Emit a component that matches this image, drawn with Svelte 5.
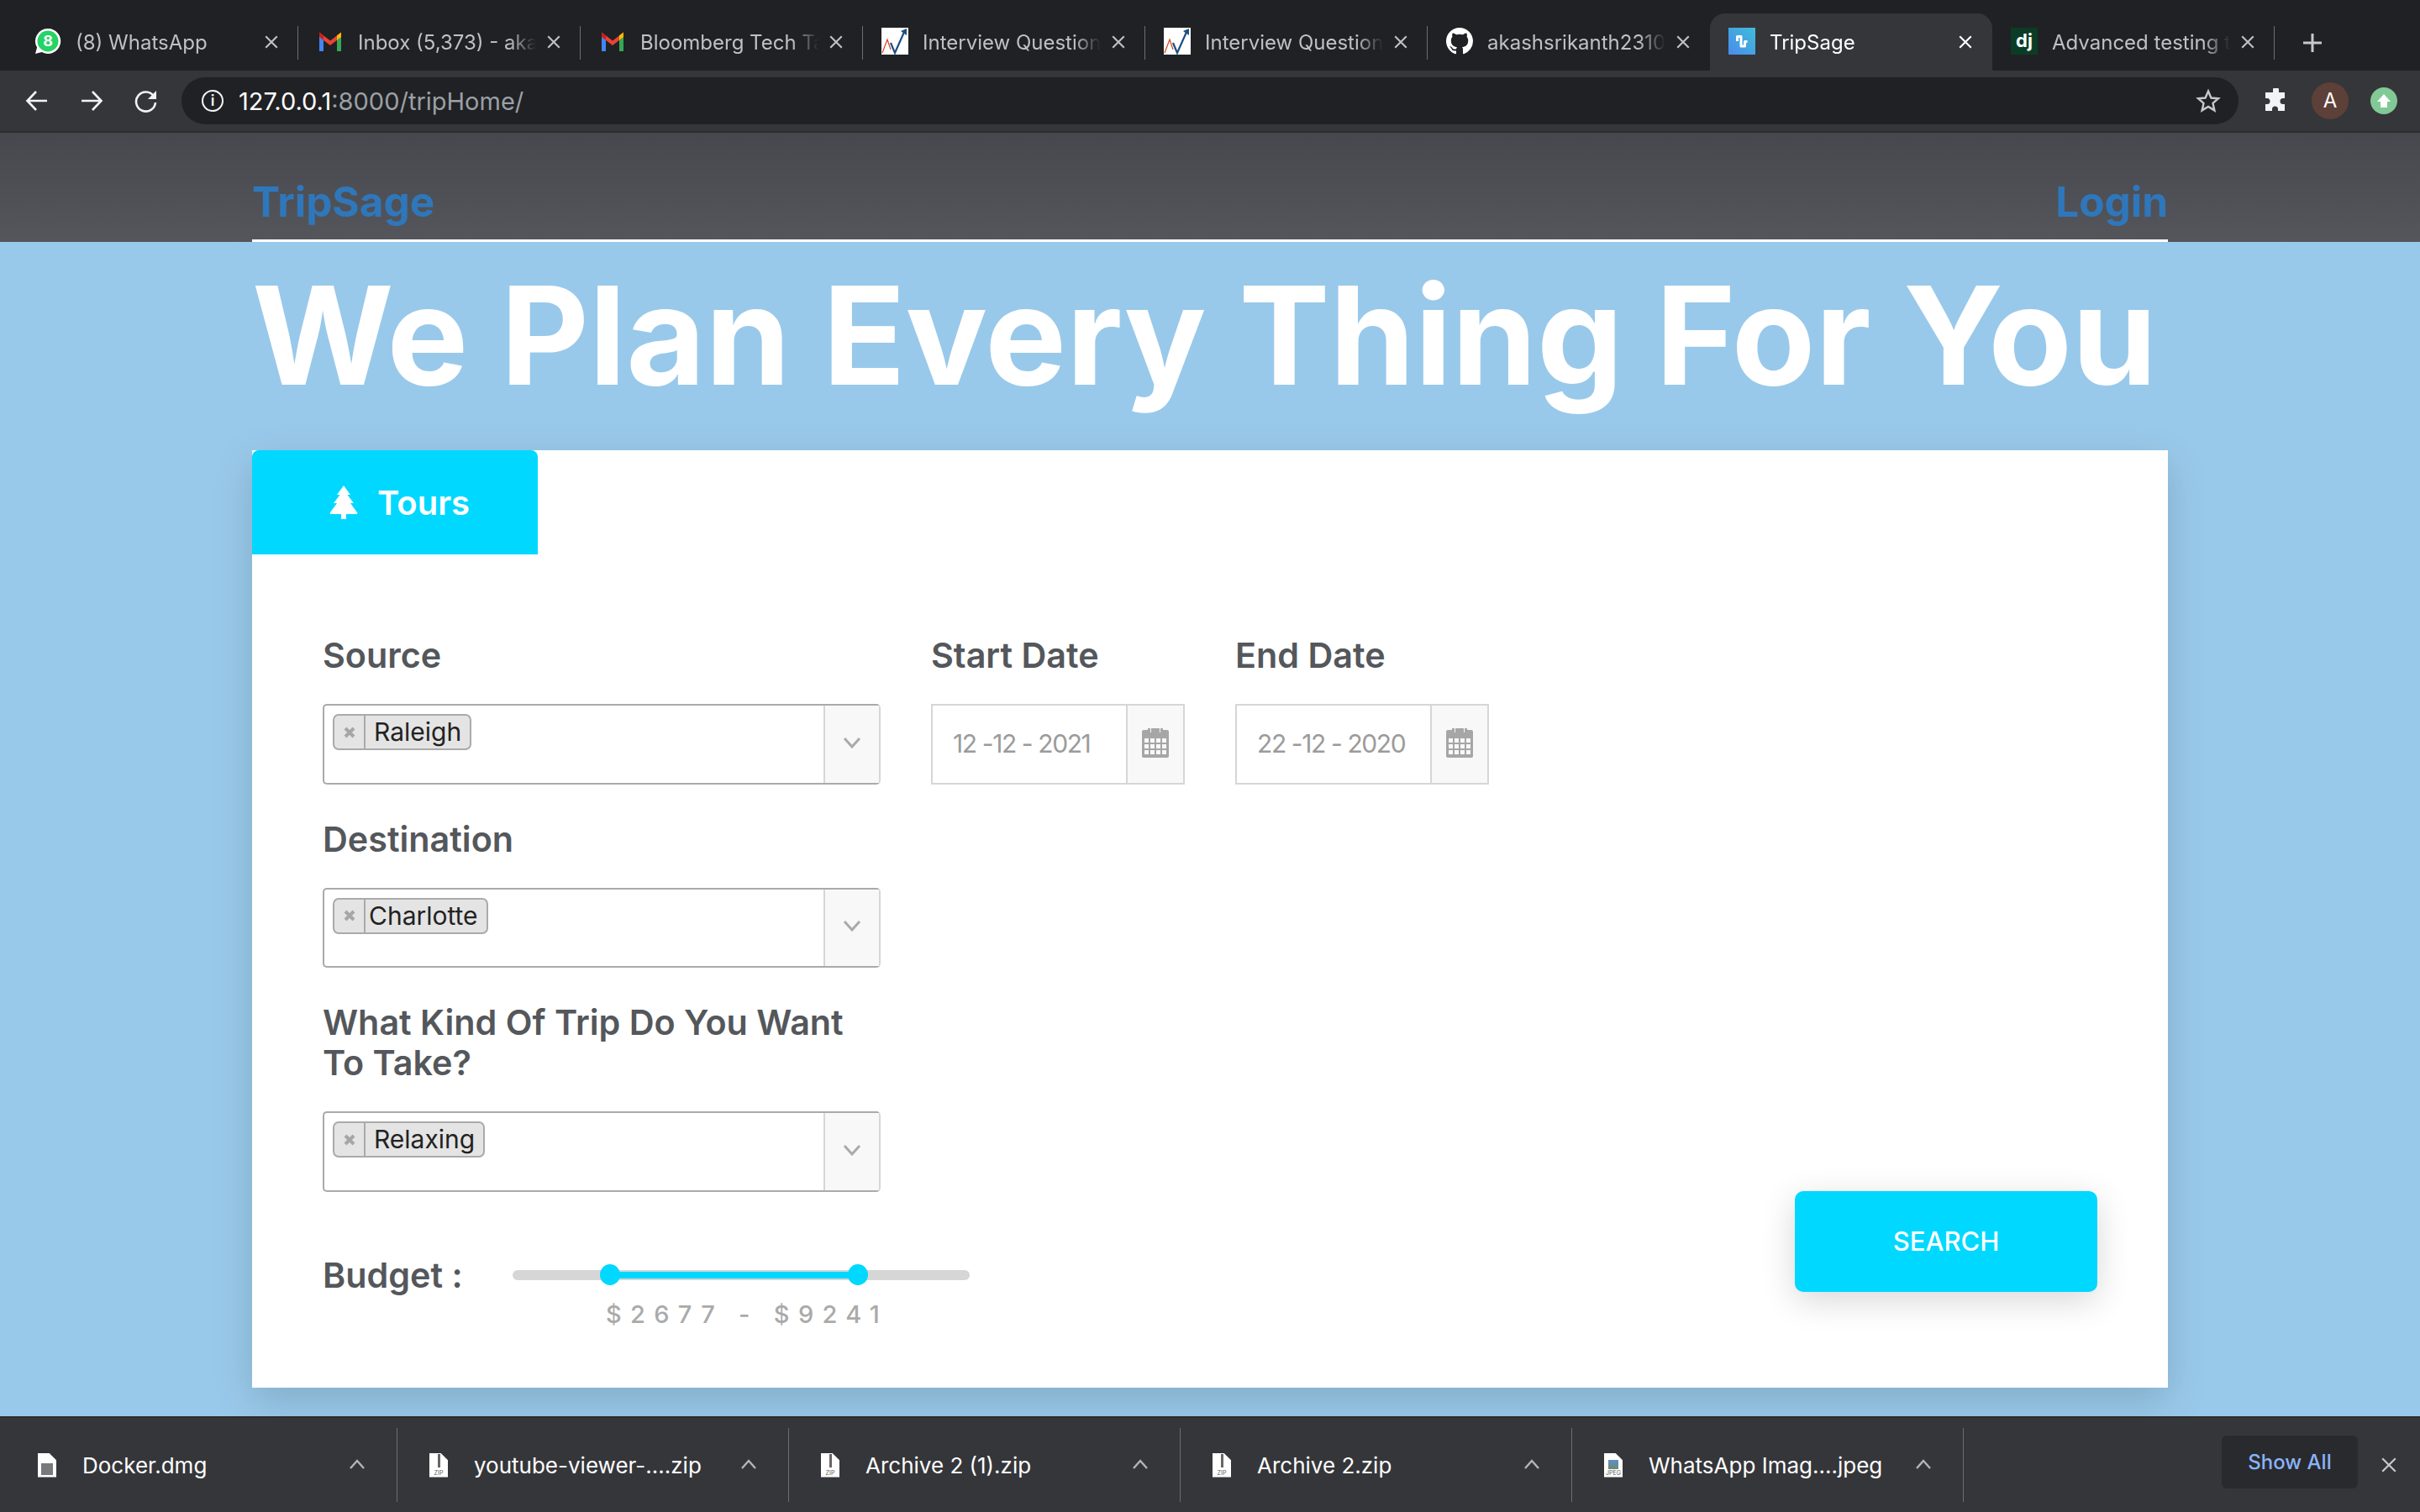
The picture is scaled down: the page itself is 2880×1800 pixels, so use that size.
<script>
  const tabs = [
    { title: "(8) WhatsApp", icon: "wa" },
    { title: "Inbox (5,373) - akashsrikanth", icon: "gmail" },
    { title: "Bloomberg Tech Talk", icon: "gmail" },
    { title: "Interview Questions", icon: "chart" },
    { title: "Interview Questions", icon: "chart" },
    { title: "akashsrikanth2310/TripSage", icon: "github" },
    { title: "TripSage", icon: "trip", active: true },
    { title: "Advanced testing topics", icon: "dj" },
  ];

  const downloads = [
    { name: "Docker.dmg", tag: "" },
    { name: "youtube-viewer-....zip", tag: "ZIP" },
    { name: "Archive 2 (1).zip", tag: "ZIP" },
    { name: "Archive 2.zip", tag: "ZIP" },
    { name: "WhatsApp Imag....jpeg", tag: "JPEG" },
  ];

  const selects = [
    { label: "Source", value: "Raleigh", pad: "pad-wide" },
    { label: "Destination", value: "Charlotte", pad: "pad-thin" },
    { label: "What Kind Of Trip Do You Want To Take?", value: "Relaxing", pad: "pad-wide" },
  ];

  const dates = [
    { label: "Start Date", value: "12 -12 - 2021" },
    { label: "End Date", value: "22 -12 - 2020" },
  ];

  const low = 21.3;
  const high = 75.5;
</script>

<div class="page">
  <div class="tabstrip">
    {#each tabs as tab, i}
      <div class="tab" class:active={tab.active} class:nosep={tabs[i + 1]?.active || tab.active}>
        <span class="favicon">
          {#if tab.icon === "wa"}
            <svg viewBox="0 0 32 32" width="32" height="32">
              <path d="M16 1a15 15 0 0 0-12.900 22.600L1 31l7.700-2A15 15 0 1 0 16 1z" fill="#fff" />
              <circle cx="16" cy="16" r="12.500" fill="#25d366" />
              <text x="16" y="22" text-anchor="middle" class="wa-num">8</text>
            </svg>
          {:else if tab.icon === "gmail"}
            <svg viewBox="0 0 32 32" width="32" height="32">
              <path d="M3 28V8l5 3v17H3z" fill="#4285f4" />
              <path d="M24 28V11l5-3v20h-5z" fill="#34a853" />
              <path d="M3 5.500 16 15.500 29 5.500V11L16 21 3 11z" fill="#ea4335" />
              <path d="M3 5.500v5.500l5 3.800V9.300z" fill="#c5221f" />
              <path d="M24 9.300v5.500l5-3.800V5.500z" fill="#fbbc04" />
            </svg>
          {:else if tab.icon === "chart"}
            <svg viewBox="0 0 32 32" width="32" height="32">
              <rect width="32" height="32" fill="#fff" />
              <path d="M1 30 7 14 11 26" fill="none" stroke="#d9411e" stroke-width="1.200" />
              <path d="M11 18 16 30 28 3" fill="none" stroke="#1c4f82" stroke-width="2.200" />
              <path d="M23 4 30 1 30 9z" fill="#1c4f82" />
            </svg>
          {:else if tab.icon === "github"}
            <svg viewBox="0 0 16 16" width="32" height="32">
              <path fill="#fff" d="M8 0C3.580 0 0 3.580 0 8c0 3.540 2.290 6.530 5.470 7.590.4.070.55-.17.55-.38 0-.19-.01-.82-.01-1.490-2.010.37-2.530-.49-2.690-.94-.09-.23-.48-.94-.82-1.130-.28-.15-.68-.52-.01-.53.63-.01 1.080.58 1.230.82.72 1.210 1.870.87 2.330.66.070-.52.28-.87.51-1.070-1.780-.2-3.640-.89-3.640-3.950 0-.87.31-1.590.82-2.150-.08-.2-.36-1.020.08-2.120 0 0 .67-.21 2.200.82.64-.18 1.320-.27 2-.27s1.360.09 2 .27c1.530-1.040 2.200-.82 2.200-.82.44 1.100.16 1.920.08 2.120.51.560.82 1.270.82 2.150 0 3.070-1.870 3.750-3.650 3.950.29.25.54.73.54 1.480 0 1.070-.01 1.930-.01 2.200 0 .21.15.46.55.38A8.010 8.010 0 0 0 16 8c0-4.420-3.580-8-8-8z" />
            </svg>
          {:else if tab.icon === "trip"}
            <span class="trip-icon">
              <svg viewBox="0 0 32 32" width="32" height="32">
                <path d="M10.500 16V10.500h4.500V22h4.500V16.500h3" fill="none" stroke="#fff" stroke-width="3" stroke-linejoin="round" />
              </svg>
            </span>
          {:else}
            <span class="dj-icon">dj</span>
          {/if}
        </span>
        <span class="tab-title">{tab.title}</span>
        <svg class="tab-close" viewBox="0 0 16 16" width="18" height="18">
          <path d="M2 2 14 14 M14 2 2 14" stroke="currentColor" stroke-width="1.900" />
        </svg>
      </div>
    {/each}
    <svg class="new-tab" viewBox="0 0 24 24" width="24" height="24">
      <path d="M12 1v22 M1 12h22" stroke="#c6c8cb" stroke-width="3" />
    </svg>
  </div>

  <div class="toolbar">
    <svg class="nav-icon" viewBox="0 0 28 28" width="28" height="28">
      <path d="M26 14H3 M13 3 2.500 14 13 25" fill="none" stroke="#f1f3f4" stroke-width="2.600" />
    </svg>
    <svg class="nav-icon" viewBox="0 0 28 28" width="28" height="28">
      <path d="M2 14h23 M15 3l10.500 11L15 25" fill="none" stroke="#f1f3f4" stroke-width="2.600" />
    </svg>
    <svg class="nav-icon" viewBox="0 0 28 28" width="28" height="28">
      <path d="M23 8.500A11.500 11.500 0 1 0 25 16" fill="none" stroke="#f1f3f4" stroke-width="2.600" />
      <path d="M26 2v10H16z" fill="#f1f3f4" />
    </svg>
    <div class="omnibox">
      <span class="info">i</span>
      <span class="url"><span class="host">127.0.0.1</span>:8000/tripHome/</span>
      <svg class="star" viewBox="0 0 30 30" width="30" height="30">
        <path d="M15 3.500 18.400 11.500 27 12.200 20.500 17.900 22.400 26.400 15 21.900 7.600 26.400 9.500 17.900 3 12.200 11.600 11.500z" fill="none" stroke="#c6c8cb" stroke-width="2.400" />
      </svg>
    </div>
    <svg class="puzzle" viewBox="0 0 30 30" width="30" height="30">
      <path fill="#f1f3f4" d="M12 2a3.500 3.500 0 0 1 7 0v3h7v7h-2a3.500 3.500 0 0 0 0 7h2v8h-8v-2a3.500 3.500 0 0 0-7 0v2H3v-8h2a3.500 3.500 0 0 0 0-7H3V5h9z" />
    </svg>
    <span class="avatar">A</span>
    <span class="update">
      <svg viewBox="0 0 20 20" width="20" height="20"><path d="M10 2 18 11h-4v7H6v-7H2z" fill="#fff" /></svg>
    </span>
  </div>

  <main class="content">
    <header class="site-nav">
      <div class="nav-inner">
        <a class="brand">TripSage</a>
        <a class="login">Login</a>
      </div>
    </header>

    <div class="wrap">
      <h1>We Plan Every Thing For You</h1>

      <section class="card">
        <div class="card-tab">
          <svg viewBox="0 0 36 42" width="36" height="42">
            <path fill="#fff" d="M18 1 26 12h-3.500L30 22h-4l8 11q1 2-1 2H21v6h-6v-6H3q-2 0-1-2l8-11H6l7.500-10H10z" />
          </svg>
          <span>Tours</span>
        </div>

        <div class="form">
          <div class="stack">
            {#each selects as s}
              <div>
                <label class="field-label">{s.label}</label>
                <div class="select">
                  <div class="select-value">
                    <span class="chip">
                      <span class="chip-x">
                        <svg viewBox="0 0 14 14" width="14" height="14">
                          <path d="M2 2 12 12 M12 2 2 12" stroke="#a6a6a6" stroke-width="4" />
                        </svg>
                      </span>
                      <span class="chip-text {s.pad}">{s.value}</span>
                    </span>
                  </div>
                  <div class="addon">
                    <svg viewBox="0 0 22 14" width="22" height="14">
                      <path d="M2 2 11 12 20 2" fill="none" stroke="#aaa" stroke-width="3" />
                    </svg>
                  </div>
                </div>
              </div>
            {/each}
          </div>

          {#each dates as d}
            <div>
              <label class="field-label">{d.label}</label>
              <div class="date">
                <div class="date-value">{d.value}</div>
                <div class="addon date-addon">
                  <svg viewBox="0 0 34 36" width="34" height="36">
                    <path fill="#a6a6a6" fill-rule="evenodd" d="M3 3h5V1h3v5h1V1h10v0h0V6h1V1h3v2h5q2 0 2 2v29q0 2-2 2H3q-2 0-2-2V5q0-2 2-2zM4 13v5h5v-5zm7 0v5h5v-5zm7 0v5h5v-5zm7 0v5h5v-5zM4 20v5h5v-5zm7 0v5h5v-5zm7 0v5h5v-5zm7 0v5h5v-5zM4 27v5h5v-5zm7 0v5h5v-5zm7 0v5h5v-5zm7 0v5h5v-5z" />
                  </svg>
                </div>
              </div>
            </div>
          {/each}

          <div class="budget">
            <span class="budget-label">Budget :</span>
            <div class="slider-col">
              <div class="track">
                <div class="fill" style="left: {low}%; width: {high - low}%"></div>
                <span class="handle" style="left: {low}%"></span>
                <span class="handle" style="left: {high}%"></span>
              </div>
              <div class="price">$2677 - $9241</div>
            </div>
          </div>

          <button class="search">SEARCH</button>
        </div>
      </section>
    </div>
  </main>

  <footer class="downloads">
    {#each downloads as d}
      <div class="dl">
        <span class="file">
          {#if d.tag === "JPEG"}
            <span class="thumb"></span>
            <span class="file-tag">{d.tag}</span>
          {:else if d.tag}
            <span class="zipper"></span>
            <span class="file-tag">{d.tag}</span>
          {:else}
            <span class="disk"></span>
          {/if}
        </span>
        <span class="dl-name">{d.name}</span>
        <svg class="caret" viewBox="0 0 20 14" width="20" height="14">
          <path d="M2 12 10 3l8 9" fill="none" stroke="#b4b5b8" stroke-width="2.400" />
        </svg>
      </div>
    {/each}
    <button class="show-all">Show All</button>
    <svg class="dl-close" viewBox="0 0 18 18" width="20" height="20">
      <path d="M2 2 16 16 M16 2 2 16" stroke="#c6c8cb" stroke-width="2" />
    </svg>
  </footer>
</div>

<style>
  :global(body) {
    margin: 0;
    background: #99c9ea;
  }
  .page {
    width: 2880px;
    height: 1800px;
    display: flex;
    flex-direction: column;
    overflow: hidden;
    font-family: Inter, "Liberation Sans", sans-serif;
  }

  /* browser chrome */
  .tabstrip {
    height: 84px;
    flex: none;
    display: flex;
    align-items: flex-end;
    padding-left: 19px;
    background: #202124;
    box-sizing: border-box;
  }
  .tab {
    width: 336px;
    height: 68px;
    flex: none;
    position: relative;
    display: flex;
    align-items: center;
    padding-left: 22px;
    padding-bottom: 2px;
    box-sizing: border-box;
    color: #bdc1c6;
  }
  .tab::after {
    content: "";
    position: absolute;
    right: 0;
    top: 15px;
    height: 40px;
    width: 1px;
    background: #6d6e71;
  }
  .tab.nosep::after {
    display: none;
  }
  .tab.active {
    background: #35363a;
    color: #fff;
    border-radius: 18px 18px 0 0;
  }
  .favicon {
    width: 32px;
    height: 32px;
    flex: none;
    display: block;
  }
  .favicon svg {
    display: block;
  }
  .wa-num {
    font: 700 18px Inter, sans-serif;
    fill: #fff;
  }
  .trip-icon {
    display: block;
    width: 32px;
    height: 32px;
    background: linear-gradient(to top right, #4a8cec, #3fbcd8);
  }
  .dj-icon {
    display: block;
    width: 32px;
    height: 32px;
    background: #0c3c26;
    color: #fff;
    font-size: 22px;
    font-weight: 700;
    line-height: 30px;
    text-align: center;
  }
  .tab-title {
    width: 212px;
    margin: 2px 0 0 17px;
    font-size: 24px;
    white-space: nowrap;
    overflow: hidden;
    -webkit-mask-image: linear-gradient(to right, #000 85%, transparent);
    mask-image: linear-gradient(to right, #000 85%, transparent);
  }
  .tab-close {
    margin-left: 12px;
    margin-top: 2px;
    flex: none;
  }
  .new-tab {
    margin-left: 33px;
    margin-bottom: 21px;
  }

  .toolbar {
    height: 74px;
    flex: none;
    display: flex;
    align-items: center;
    background: #35363a;
    box-sizing: border-box;
    padding: 0 0 0 30px;
    border-bottom: 2px solid #2b2c2f;
  }
  .nav-icon {
    margin-right: 37px;
    flex: none;
  }
  .omnibox {
    width: 2448px;
    height: 56px;
    margin-left: -9px;
    border-radius: 28px;
    background: #202124;
    display: flex;
    align-items: center;
    padding-left: 24px;
    box-sizing: border-box;
    flex: none;
  }
  .info {
    width: 22px;
    height: 22px;
    border: 2px solid #f1f3f4;
    border-radius: 50%;
    color: #f1f3f4;
    font-size: 18px;
    line-height: 22px;
    text-align: center;
    font-weight: 600;
  }
  .url {
    margin-left: 18px;
    font-size: 29px;
    color: #9aa0a6;
  }
  .host {
    color: #fff;
  }
  .star {
    margin-left: auto;
    margin-right: 21px;
  }
  .puzzle {
    margin-left: 29px;
    flex: none;
  }
  .avatar {
    width: 44px;
    height: 44px;
    margin-left: 28px;
    border-radius: 50%;
    background: #5d4037;
    color: #fff;
    font-size: 24px;
    line-height: 44px;
    text-align: center;
    flex: none;
  }
  .update {
    width: 32px;
    height: 32px;
    margin-left: 26px;
    border-radius: 50%;
    background: #81c995;
    display: flex;
    align-items: center;
    justify-content: center;
    flex: none;
  }

  /* page */
  .content {
    flex: 1;
    min-height: 0;
    overflow: hidden;
    background: #99c9ea;
  }
  .site-nav {
    height: 130px;
    background: linear-gradient(to bottom, #46484d, #54565c);
    padding: 0 300px;
    box-sizing: border-box;
  }
  .nav-inner {
    height: 130px;
    box-sizing: border-box;
    border-bottom: 3px solid #fff;
    display: flex;
    justify-content: space-between;
    align-items: center;
    padding-top: 36px;
    color: #2f77bb;
    font-size: 49.500px;
    font-weight: 700;
  }
  .wrap {
    padding: 0 300px;
  }
  h1 {
    margin: 0;
    height: 248px;
    color: #fff;
    font-size: 162.500px;
    line-height: 222px;
    font-weight: 700;
    white-space: nowrap;
  }
  .card {
    height: 1116px;
    background: #fff;
    box-shadow: 0 15px 45px rgba(0, 0, 0, 0.15);
  }
  .card-tab {
    width: 340px;
    height: 124px;
    padding-left: 10px;
    box-sizing: border-box;
    background: #00d8ff;
    border-radius: 8px 8px 0 0;
    display: flex;
    align-items: center;
    justify-content: center;
    gap: 22px;
    color: #fff;
    font-size: 40px;
    font-weight: 600;
  }
  .form {
    display: grid;
    grid-template-columns: 663px 302px 302px 1fr;
    column-gap: 60px;
    padding: 96px 84px 0 85px;
    align-items: start;
  }
  .stack {
    display: flex;
    flex-direction: column;
    gap: 41px;
    margin-left: -1px;
  }
  .field-label {
    display: block;
    margin-bottom: 34px;
    color: #54575b;
    font-size: 41.300px;
    line-height: 48px;
    font-weight: 600;
  }
  .select,
  .date {
    display: flex;
    height: 95.500px;
    box-sizing: border-box;
    background: #fff;
  }
  .select {
    border: 2px solid #aaa;
    border-right-color: #d6d6d6;
    border-radius: 5px;
  }
  .select-value {
    flex: 1;
    padding: 10px 0 0 10px;
  }
  .addon {
    width: 66px;
    border-left: 2px solid #d6d6d6;
    background: #f8f8f8;
    display: flex;
    align-items: center;
    justify-content: center;
    padding-bottom: 4px;
    box-sizing: border-box;
  }
  .chip {
    display: inline-flex;
    height: 43px;
    box-sizing: border-box;
    border: 2px solid #aaa;
    border-radius: 7px;
    background: #e4e4e4;
    color: #222;
    font-size: 30px;
    line-height: 39px;
  }
  .chip-x {
    width: 35px;
    border-right: 2px solid #aaa;
    display: flex;
    align-items: center;
    justify-content: center;
    box-sizing: content-box;
  }
  .chip-text.pad-wide {
    padding: 0 10px 0 10px;
  }
  .chip-text.pad-thin {
    padding: 0 10px 0 4px;
  }
  .date {
    border: 2px solid #d6d6d6;
    color: #9b9b9b;
    font-size: 30px;
    letter-spacing: -1.400px;
  }
  .date-value {
    flex: 1;
    display: flex;
    align-items: center;
    padding: 0 0 2px 24px;
  }
  .date-addon {
    width: 68px;
  }

  .budget {
    grid-column: 1 / span 2;
    display: flex;
    align-items: flex-start;
    padding-top: 75px;
    margin-left: -1px;
  }
  .budget-label {
    width: 226px;
    color: #54575b;
    font-size: 41.300px;
    line-height: 48px;
    font-weight: 600;
  }
  .slider-col {
    width: 544px;
  }
  .track {
    position: relative;
    height: 12px;
    margin-top: 18px;
    border-radius: 6px;
    background: #d6d6d6;
  }
  .fill {
    position: absolute;
    top: 2px;
    height: 8px;
    background: #00d8ff;
  }
  .handle {
    position: absolute;
    top: -7px;
    width: 24px;
    height: 25px;
    margin-left: -12px;
    border-radius: 50%;
    background: #00d8ff;
  }
  .price {
    margin: 23px 0 0 111px;
    color: #aaa;
    font-size: 29px;
    font-weight: 500;
    letter-spacing: 10.300px;
    white-space: nowrap;
  }
  .search {
    grid-column: 4;
    justify-self: end;
    width: 360px;
    height: 120px;
    margin-top: -1px;
    padding-bottom: 2px;
    border: 0;
    border-radius: 10px;
    background: #00d8ff;
    color: #fff;
    font: 500 31px Inter, sans-serif;
    box-shadow: 0 10px 40px rgba(0, 0, 0, 0.16);
  }

  /* downloads shelf */
  .downloads {
    height: 114px;
    flex: none;
    display: flex;
    align-items: center;
    position: relative;
    z-index: 1;
    padding-left: 7px;
    box-sizing: border-box;
    border-top: 2px solid #2b2c2f;
    background: #35363a;
    color: #fff;
  }
  .dl {
    width: 466px;
    height: 88px;
    flex: none;
    display: flex;
    align-items: center;
    padding-left: 38px;
    box-sizing: border-box;
    border-right: 1px solid #6d6e71;
  }
  .file {
    position: relative;
    width: 22px;
    height: 29px;
    flex: none;
    background: #fff;
    clip-path: polygon(0 0, 60% 0, 100% 30%, 100% 100%, 0 100%);
  }
  .zipper {
    position: absolute;
    left: 10px;
    top: 1px;
    width: 3px;
    height: 16px;
    background: #666;
  }
  .disk {
    position: absolute;
    left: 4px;
    top: 12px;
    width: 14px;
    height: 14px;
    background: #77797c;
  }
  .thumb {
    position: absolute;
    left: 5px;
    top: 8px;
    width: 12px;
    height: 11px;
    background: linear-gradient(#5b8fd0, #6e8a6a);
  }
  .file-tag {
    position: absolute;
    left: 0;
    right: 0;
    bottom: 1px;
    color: #555;
    font-size: 7px;
    line-height: 8px;
    text-align: center;
  }
  .dl-name {
    width: 317px;
    margin-left: 31px;
    font-size: 26px;
    white-space: nowrap;
  }
  .caret {
    flex: none;
    margin-top: -2px;
  }
  .show-all {
    width: 162px;
    height: 63px;
    margin: -8px 0 0 307px;
    border: 0;
    border-radius: 6px;
    background: #292a2d;
    color: #8ab4f8;
    font: 500 24px Inter, sans-serif;
  }
  .dl-close {
    margin-left: 27px;
    flex: none;
  }
</style>
